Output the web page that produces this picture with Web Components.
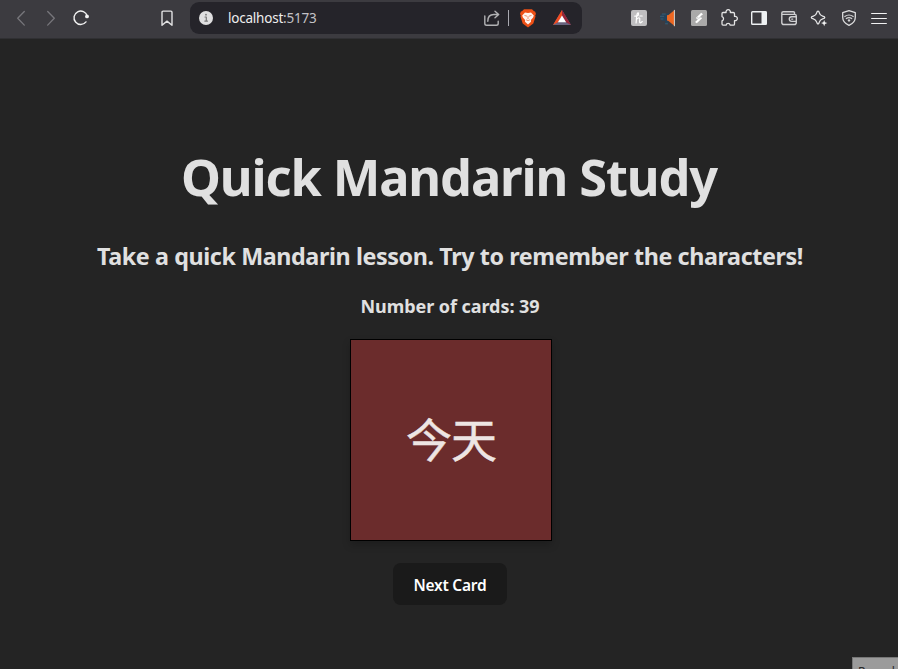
<!DOCTYPE html>
<html lang="en">
<head>
<meta charset="utf-8">
<title>Quick Mandarin Study</title>
<style>
html,body{margin:0;height:100%;overflow:hidden;background:#242424}
body{font-family:"Noto Sans","Open Sans","Noto Sans CJK SC",sans-serif}
</style>
</head>
<body>
<study-window></study-window>
<script>
const define = (name, html, after) => customElements.define(name, class extends HTMLElement {
  connectedCallback() {
    if (this.shadowRoot) return;
    this.attachShadow({mode: 'open'}).innerHTML = html;
    if (after) after(this);
  }
});

/* Text tracked so that it fills the width given in its attribute. */
define('fit-text', `<style>:host{display:inline-block;white-space:nowrap}span{display:inline-block}</style><span><slot></slot></span>`, el => {
  const span = el.shadowRoot.querySelector('span');
  const width = +el.getAttribute('width');
  const extra = (width - span.getBoundingClientRect().width) / el.textContent.length;
  span.style.letterSpacing = extra + 'px';
});

const icons = {
  back: '<path d="M13.3 3.5 6.7 10.3l6.6 6.8" stroke="#77767b" stroke-width="1.3"/>',
  forward: '<path d="M6.7 3.5l6.6 6.8-6.6 6.8" stroke="#77767b" stroke-width="1.3"/>',
  reload: '<path d="M16.2 8.1A6.7 6.7 0 1 0 15 13.9" stroke="#f2f2f2" stroke-width="1.4"/><circle cx="16" cy="8.4" r="1.9" fill="#f2f2f2"/>',
  bookmark: '<path d="M5 4.2q0-1.1 1.1-1.1h7.8q1.1 0 1.1 1.1v13l-5-4.1-5 4.1z" stroke="#e2e2e3" stroke-width="1.4"/>',
  info: '<circle cx="10" cy="10" r="7" fill="#dfdfe0"/><path d="M9 9h1.3v4M8.8 13.1h2.7" stroke="#777" stroke-width="1.2"/><circle cx="10" cy="6.7" r=".9" fill="#777"/>',
  share: '<path d="M2.8 8v7.4q0 1.8 1.8 1.8h9.8q1.8 0 1.8-1.8v-2.2M5.8 13.2c0-4.3 2.1-6.7 6-6.7h4.4M13 3.3l3.7 3.2L13 9.8" stroke="#b2b2b4" stroke-width="1.4"/>',
  brave: '<path d="M6 1.2h8l2 2 1.1.4.9 2.4-.8 1.2.3 1.3-2.2 7.1L10 19.5l-5.3-3.9-2.2-7.1.3-1.3L2 6l.9-2.4L4 3.2z" fill="#ed5016"/><path d="m7 4.4 3 .6 3-.6 2.8 3-.7 2-2.2 2.6.1 1.8-3 2.7-3-2.7.1-1.8-2.2-2.6-.7-2z" fill="#fff4ee"/><path d="m6.8 7.5 1.9.6M13.2 7.5l-1.9.6M10 8.6v2M8.5 12l1.5.6 1.5-.6" stroke="#e77850" stroke-width=".8"/>',
  bat: '<path d="M10 2 1 17h18z" fill="#67627d"/><path d="M10 2 1 17l5-2.8L10 8z" fill="#f04b21"/><path d="m10 2 9 15-5-2.8L10 8z" fill="#972538"/><path d="m10 7.6-4.1 6.6h8.2z" fill="#fff"/>',
  honey: '<rect x="2" y="2" width="16" height="16" rx="2" fill="#bfbec0"/><path d="M5.8 8.2q3.8.2 3.7-2.3Q9.3 4.1 8.4 5.3 7.6 6.4 7.1 15M7.3 12c1-2.2 3.3-2.8 3.5-1.2.1 1.7-.8 4.6.9 4l1.6-1.2M10.8 8h2.4" stroke="#fff" stroke-width="1.2"/>',
  horn: '<path d="M4 5.5h6v8H9.3v2.7H6.1v-3.4H3L1 11V8l1.4-2z" fill="#26435a"/><path d="M1.4 8.3h3.3M2 11h2M3.3 6h3M6.5 15.8h2" stroke="#48697a" stroke-width=".7"/><path d="m8 7.2 1.5-.2L15 2.5v15L9.5 13 8 12.4z" fill="#ed6722"/><path d="M15.4 2.3v15.5" stroke="#d9d6cf"/>',
  script: '<rect x="2" y="2" width="16" height="16" rx="1.5" fill="#aaa9a9"/><path d="m12.2 4.8 1.8 1.4-2.8 2.4 1.9 1.6-5.3 5-1.8-1.3 2.8-2.5-2-1.5z" fill="#fff"/><path d="m8.2 9.7 1.5.5 1.7-.7" stroke="#aaa9a9" stroke-width=".6"/>',
  puzzle: '<path d="M3 5.5q0-1 1-1h3.1a2.2 2.2 0 1 1 4.2 0h3q1.2 0 1.2 1.2v2.7a2.2 2.2 0 1 1 0 4.2v3.3q0 1.2-1.2 1.2h-3.1a2.1 2.1 0 0 0-4.1 0H4q-1 0-1-1v-3.3a2.2 2.2 0 0 0 0-4.2z" stroke="#e4e4e4" stroke-width="1.3"/>',
  panel: '<rect x="2.7" y="3.7" width="14.6" height="12.6" rx=".8" stroke="#eef1f3" stroke-width="1.4"/><path d="M12.5 3.5h5v13h-5z" fill="#eef1f3"/>',
  wallet: '<path d="M15.5 6.2V4.8q0-1.1-1.1-1.1H4.3q-1.5 0-1.5 1.4v9.3q0 2.1 2.1 2.1h10.3q2.1 0 2.1-2.1V8q0-1.6-1.6-1.6H3.3M17.2 8.8h-4.6a2.3 2.3 0 0 0 0 4.6h4.6M12.7 11.1h1" stroke="#d0d0d2" stroke-width="1.4"/>',
  spark: '<path d="M9 3.1q1 0 1.3 1.7.7 2.6 3.3 3.3 2.2.6 2.2 1.3 0 .9-2.2 1.4-2.6.8-3.3 3.3Q9.9 16 9 16q-.8 0-1.3-1.9-.8-2.5-3.3-3.3-2.1-.5-2.1-1.4 0-.7 2.1-1.3Q7 7.4 7.7 4.8 8.1 3.1 9 3.1z" stroke="#e7e7e8" stroke-width="1.3"/><path d="m15.2 11.9.8 2.3 2.3.9-2.3.8-.8 2.3-.9-2.3-2.3-.8 2.3-.9z" fill="#f2f2f2"/>',
  shield: '<path d="m10 2.7 6.3 2v4.6q0 5.3-6.3 8.1-6.3-2.8-6.3-8.1V4.7z" stroke="#dededf" stroke-width="1.3"/><path d="M5.8 8.5q4.2-3 8.4 0M7.3 10.6q2.7-1.8 5.4 0" stroke="#d5d5d6" stroke-width="1.2"/><circle cx="10" cy="12.4" r="1.2" fill="#d5d5d6"/>',
  menu: '<path d="M2.6 5.5h14.8M2.6 10.5h14.8M2.6 15.5h14.8" stroke="#f1f1f2" stroke-width="1.1"/>'
};
define('tool-icon', `<style>:host{display:block;width:20px;height:20px;flex:none}svg{display:block;width:20px;height:20px;fill:none;stroke-linejoin:round;stroke-linecap:round}</style><svg viewBox="0 0 20 20"></svg>`, el => {
  el.shadowRoot.querySelector('svg').innerHTML = icons[el.getAttribute('name')];
});

define('address-bar', `<style>
:host{display:flex;align-items:center;box-sizing:border-box;width:392px;height:32px;border-radius:9px;background:#25242a;padding:0 10px 0 6px;flex:none}
.url{font-size:13.5px;color:#eee;margin-left:12px;flex:1;line-height:20px}
.port{color:#c3c2c6}
.bar{width:1px;height:16px;background:#a9a9b0;margin:0 9px 0 6px}
.gap{width:14px}
</style><tool-icon name="info"></tool-icon><div class="url"><fit-text width="88.5">localhost<span class="port">:5173</span></fit-text></div>
<tool-icon name="share"></tool-icon><div class="bar"></div><tool-icon name="brave"></tool-icon><div class="gap"></div><tool-icon name="bat"></tool-icon>`);

define('browser-bar', `<style>
:host{display:flex;box-sizing:border-box;height:39px;background:#3c3b40;border-bottom:1px solid #303033;padding:2px 9px 4px 11px;align-items:center}
.nav,.ext{display:flex;gap:10px}
.nav{width:146px}.mark{width:33px}
.ext{margin-left:auto}
</style><div class="nav"><tool-icon name="back"></tool-icon><tool-icon name="forward"></tool-icon><tool-icon name="reload"></tool-icon></div>
<div class="mark"><tool-icon name="bookmark"></tool-icon></div><address-bar></address-bar>
<div class="ext">${['honey','horn','script','puzzle','panel','wallet','spark','shield','menu'].map(n => `<tool-icon name="${n}"></tool-icon>`).join('')}</div>`);

define('flash-card', `<style>
:host{display:flex;align-items:center;justify-content:center;box-sizing:border-box;width:202px;height:202px;border:1px solid #000;background:#6b2c2c;color:#ede5e3;box-shadow:0 4px 8px rgba(0,0,0,.2);font:400 46px/64px "Noto Sans CJK SC",sans-serif;padding-bottom:7px;-webkit-text-stroke:.5px #ede5e3}
</style><fit-text width="90"><slot></slot></fit-text>`, el => {
  el.shadowRoot.querySelector('fit-text').shadowRoot.querySelector('span').style.letterSpacing = '-1px';
});

define('next-button', `<style>
:host{display:block}
button{display:block;width:114px;height:42px;border:0;border-radius:8px;background:#1a1a1a;color:#fff;font:600 15.5px/22px "Noto Sans",sans-serif;padding:2px 0 0}
</style><button><fit-text width="73">Next Card</fit-text></button>`);

define('record-tab', `<style>
:host{display:block;position:fixed;left:852px;top:657px;width:46px;height:12px;box-sizing:border-box;border:1px solid #777;border-right:0;border-bottom:0;background:#9b9b9b;color:#292929;overflow:hidden;font-size:12px;line-height:16px;padding:6px 0 0 5px}
</style><fit-text width="38"><slot></slot></fit-text>`, el => {
  el.shadowRoot.querySelector('fit-text').shadowRoot.querySelector('span').style.letterSpacing = '-.5px';
});

define('study-page', `<style>
:host{display:flex;flex-direction:column;align-items:center;height:630px;box-sizing:border-box;padding:108px 0 0 4px;color:#e0e0e0}
h1,h2,h3{margin:0;font-weight:700}
h1{font-size:50.5px;line-height:60px;height:91px}
h2{font-size:23.3px;line-height:36px;height:53px}
h3{font-size:18px;line-height:30px;height:48px}
next-button{margin-top:22px}
h1,h2,h3,next-button{position:relative;left:-1px}
h1{left:-2px}
</style><h1><fit-text width="536">Quick Mandarin Study</fit-text></h1>
<h2><fit-text width="706">Take a quick Mandarin lesson. Try to remember the characters!</fit-text></h2>
<h3><fit-text width="179">Number of cards: 39</fit-text></h3>
<flash-card>今天</flash-card><next-button></next-button>`);

define('study-window', `<style>:host{display:block;width:898px;height:669px;overflow:hidden}</style>
<browser-bar></browser-bar><study-page></study-page><record-tab>Record</record-tab>`);
</script>
</body>
</html>
